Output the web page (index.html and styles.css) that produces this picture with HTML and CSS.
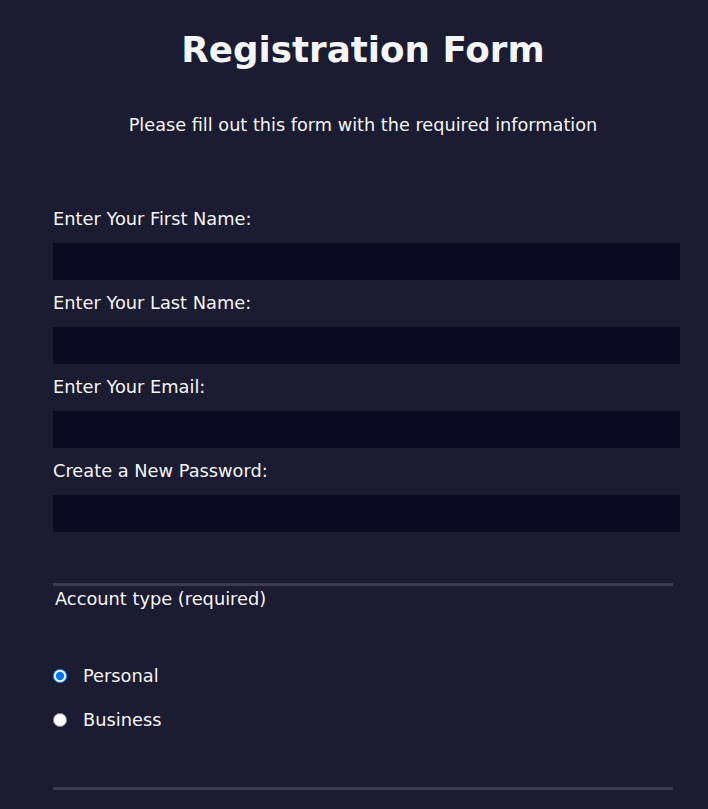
FILE: index.html
```html
<!DOCTYPE html>
<html lang="en">
<head>
<meta charset="utf-8">
<title>Registration Form</title>
<link rel="stylesheet" href="styles.css">
</head>
<body>
<div class="page">
  <h1 class="title">Registration Form</h1>
  <p class="intro">Please fill out this form with the required information</p>
  <form class="form">
    <div class="group group-fields">
      <label class="field-label" for="first">Enter Your First Name:</label>
      <input class="text-input" id="first" type="text">
      <label class="field-label" for="last">Enter Your Last Name:</label>
      <input class="text-input" id="last" type="text">
      <label class="field-label" for="email">Enter Your Email:</label>
      <input class="text-input" id="email" type="email">
      <label class="field-label" for="pw">Create a New Password:</label>
      <input class="text-input" id="pw" type="password">
    </div>
    <div class="group group-radios">
      <div class="legend">Account type (required)</div>
      <label class="radio-row"><input class="radio" type="radio" name="acct" checked> <span>Personal</span></label>
      <label class="radio-row"><input class="radio" type="radio" name="acct"> <span>Business</span></label>
    </div>
  </form>
</div>
</body>
</html>
```
FILE: styles.css
```css
html, body {
  margin: 0;
  padding: 0;
  background: #1b1b32;
}
body {
  color: #f5f6f7;
  font-family: "DejaVu Sans", sans-serif;
  font-size: 17.8px;
  height: 809px;
  overflow: hidden;
}
.page {
  padding-left: 18px;
}
.title {
  margin: 0;
  padding-top: 28px;
  font-size: 35.7px;
  line-height: 44px;
  font-weight: bold;
  text-align: center;
}
.intro {
  margin: 43px 0 0;
  font-size: 17.7px;
  line-height: 20px;
  text-align: center;
}
.form {
  width: 620px;
  margin: 72px auto 0;
}
.group {
  border-bottom: 3px solid #3b3b4f;
}
.group-fields {
  display: flex;
  flex-direction: column;
  padding-bottom: 40px;
}
.field-label {
  display: block;
  line-height: 24px;
}
.text-input {
  box-sizing: border-box;
  width: 627px;
  height: 37px;
  margin: 12px 0 11px;
  background: #0a0a23;
  border: 1px solid #0a0a23;
  color: #fff;
}
.group-radios {
  padding-bottom: 56px;
}
.legend {
  padding: 2px 0 0 2px;
  line-height: 22px;
}
.radio-row {
  display: flex;
  align-items: center;
  gap: 16px;
  line-height: 22px;
  margin-top: 22px;
}
.legend + .radio-row {
  margin-top: 55px;
}
.radio {
  margin: 0;
  width: 14px;
  height: 14px;
}
```
